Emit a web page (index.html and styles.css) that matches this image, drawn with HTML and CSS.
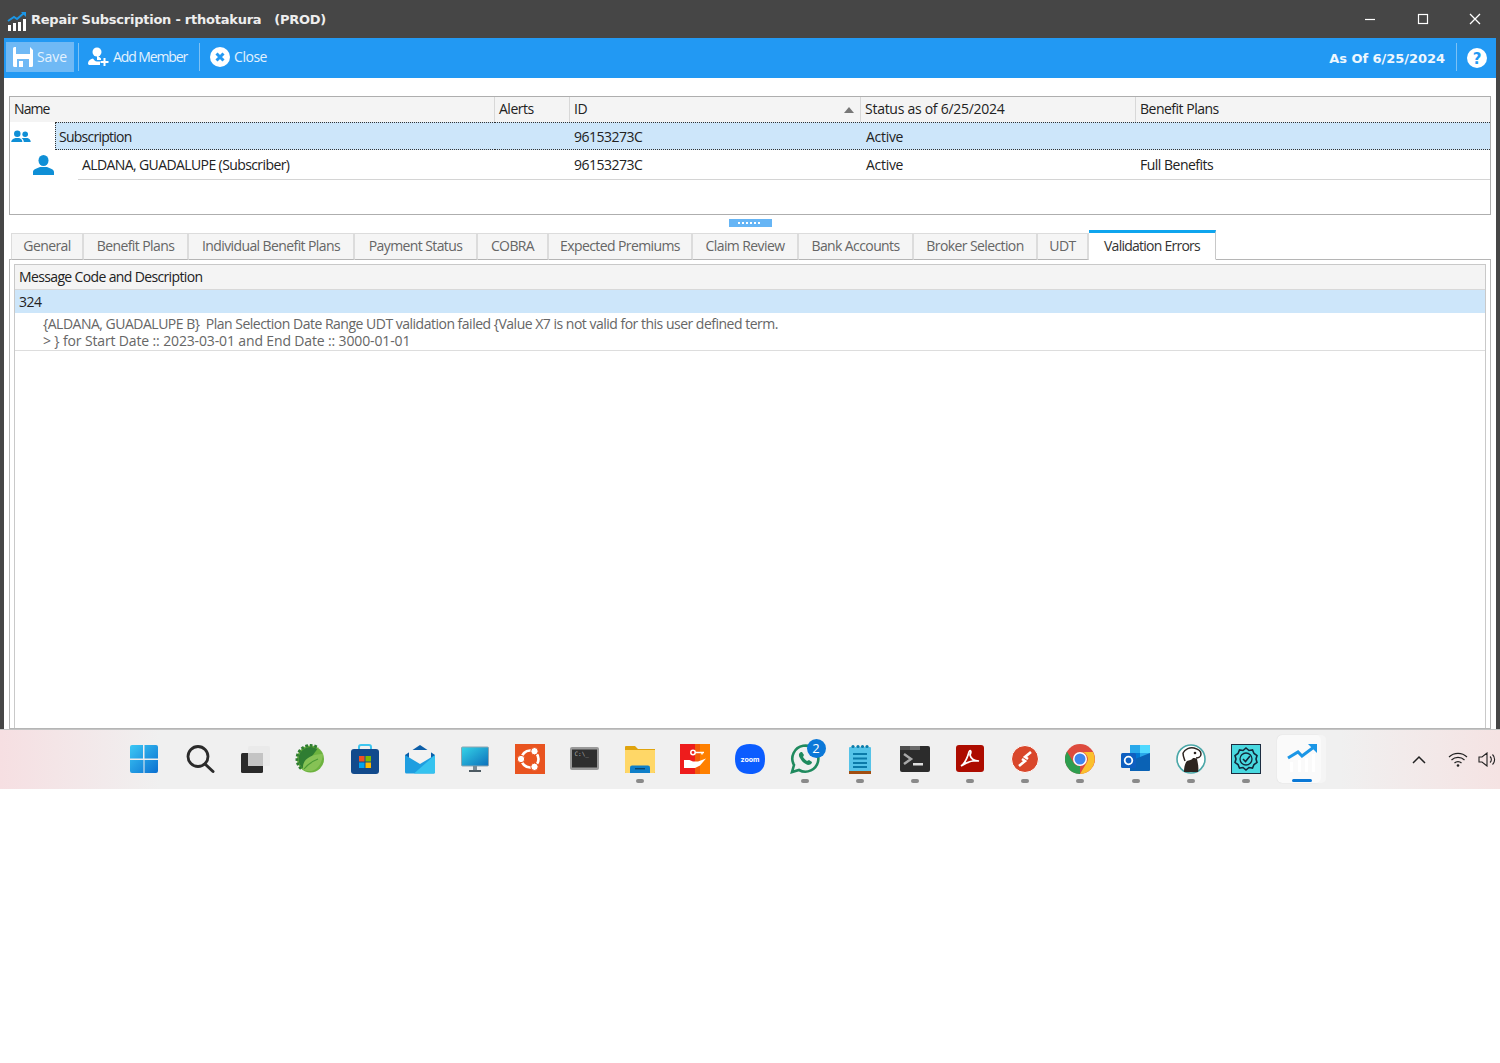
FILE: index.html
```html
<!DOCTYPE html>
<html lang="en">
<head>
<meta charset="utf-8">
<title>Repair Subscription</title>
<link rel="stylesheet" href="styles.css">
</head>
<body>
<div class="window">
  <header class="titlebar">
    <svg class="app-icon" width="22" height="22" viewBox="0 0 22 22"><path d="M2 11 L8 7 L11 9 L18 3" fill="none" stroke="#1b96e6" stroke-width="2"/><path d="M15 2 h5 v5z" fill="#1b96e6"/><path d="M2 15h3v6H2zM7 13h3v8H7zM12 12h3v9h-3zM17 9h3v12h-3z" fill="#fff"/></svg>
    <span class="title-text">Repair Subscription - rthotakura &nbsp; (PROD)</span>
    <div class="win-controls">
      <svg width="12" height="12" viewBox="0 0 12 12"><path d="M1 6.500h10" stroke="#fff" stroke-width="1.200"/></svg>
      <svg width="12" height="12" viewBox="0 0 12 12"><rect x="1.500" y="1.500" width="9" height="9" fill="none" stroke="#fff" stroke-width="1.200"/></svg>
      <svg width="12" height="12" viewBox="0 0 12 12"><path d="M1 1l10 10M11 1L1 11" stroke="#fff" stroke-width="1.300"/></svg>
    </div>
  </header>
  <nav class="toolbar">
    <button class="tool tool-active tool-save">
      <svg width="20" height="20" viewBox="0 0 20 20"><path d="M0 1.500A1.500 1.500 0 0 1 1.500 0H17l3 3v15.500a1.500 1.500 0 0 1-1.500 1.500h-17A1.500 1.500 0 0 1 0 18.500z" fill="#fff"/><rect x="3" y="0" width="14" height="7" fill="#6fb9f5"/><rect x="4" y="12" width="12" height="8" fill="#6fb9f5"/><rect x="6" y="14" width="4" height="6" fill="#fff"/></svg>
      <span>Save</span>
    </button>
    <i class="tool-sep"></i>
    <button class="tool tool-add">
      <svg width="21" height="20" viewBox="0 0 21 20"><circle cx="9" cy="5" r="4.500" fill="#fff"/><path d="M0 17c0-4 3-5 5-5.500 1 1 2 3 4 3l3 0v3.500H1z" fill="#fff"/><path d="M9 8l4 3.500v1.500H9z" fill="#fff"/><path d="M16.500 11v8M12.500 15h8" stroke="#fff" stroke-width="2"/></svg>
      <span>Add Member</span>
    </button>
    <i class="tool-sep"></i>
    <button class="tool tool-close">
      <svg width="20" height="20" viewBox="0 0 20 20"><circle cx="10" cy="10" r="10" fill="#fff"/><path d="M6.500 6.500l7 7M13.500 6.500l-7 7" stroke="#2299f3" stroke-width="3"/></svg>
      <span>Close</span>
    </button>
    <span class="as-of">As Of 6/25/2024</span>
    <i class="tool-sep sep-right"></i>
    <svg class="help" width="20" height="20" viewBox="0 0 20 20"><circle cx="10" cy="10" r="10" fill="#fff"/><text x="10" y="15.500" text-anchor="middle" class="help-mark">?</text></svg>
  </nav>

  <main class="content">
    <section class="grid">
      <div class="grid-row grid-head">
        <div class="gh gh-name">Name</div>
        <div class="gh">Alerts</div>
        <div class="gh gh-sort">ID<i class="sort-arrow"></i></div>
        <div class="gh gh-status">Status as of 6/25/2024</div>
        <div class="gh">Benefit Plans</div>
      </div>
      <div class="grid-row row-group">
        <div class="cell cell-name">
          <svg class="group-icon" width="20" height="13" viewBox="0 0 21 14"><circle cx="6.500" cy="4" r="3.500" fill="#0f8fd6"/><path d="M0 13c0-3 3-4 4.500-4.500h4C10 9 12 10 12 13z" fill="#0f8fd6"/><circle cx="15" cy="4.500" r="3" fill="#0f8fd6"/><path d="M11 8.500h6.500C19 9 21 10 21 13h-7.500c0-2-1-3.500-2.500-4.500z" fill="#0f8fd6"/></svg>
          <span class="focus-name">Subscription</span>
        </div>
        <div class="cell"></div>
        <div class="cell">96153273C</div>
        <div class="cell cell-status">Active</div>
        <div class="cell"></div>
      </div>
      <div class="grid-row row-member">
        <div class="cell cell-member">
          <svg class="member-icon" width="21" height="20" viewBox="0 0 21 20"><ellipse cx="10.500" cy="5.500" rx="5" ry="5.500" fill="#0f8fd6"/><path d="M0 20v-3c0-3 4-3.500 7-5h7c3 1.500 7 2 7 5v3z" fill="#0f8fd6"/></svg>
          <span class="member-name">ALDANA, GUADALUPE (Subscriber)</span>
        </div>
        <div class="cell"></div>
        <div class="cell">96153273C</div>
        <div class="cell cell-status">Active</div>
        <div class="cell">Full Benefits</div>
      </div>
    </section>

    <div class="splitter"><span class="grip"><i class="grip-dots"></i></span></div>

    <div class="tabs">
      <span class="tab">General</span>
      <span class="tab">Benefit Plans</span>
      <span class="tab">Individual Benefit Plans</span>
      <span class="tab">Payment Status</span>
      <span class="tab">COBRA</span>
      <span class="tab">Expected Premiums</span>
      <span class="tab">Claim Review</span>
      <span class="tab">Bank Accounts</span>
      <span class="tab">Broker Selection</span>
      <span class="tab">UDT</span>
      <span class="tab tab-active">Validation Errors</span>
    </div>
    <section class="tab-panel">
      <div class="errors">
        <div class="err-head">Message Code and Description</div>
        <div class="err-code">324</div>
        <div class="err-msg">{ALDANA, GUADALUPE B}&nbsp; Plan Selection Date Range UDT validation failed {Value X7 is not valid for this user defined term.<br><span class="err-line2">&gt; } for Start Date :: 2023-03-01 and End Date :: 3000-01-01</span></div>
      </div>
    </section>
  </main>
</div>

<footer class="taskbar">
  <div class="task-icons">
    <div class="slot slot-first"><svg width="30" height="30" viewBox="0 0 30 30"><defs><linearGradient id="w" x1="0" y1="0" x2="1" y2="1"><stop offset="0" stop-color="#3cc8f5"/><stop offset="1" stop-color="#0a6fd0"/></linearGradient></defs><path d="M1 3a2 2 0 0 1 2-2h11v13.500H1zM15.500 1H27a2 2 0 0 1 2 2v11.500H15.500zM1 16h13.500v13H3a2 2 0 0 1-2-2zM15.500 16H29v11a2 2 0 0 1-2 2H15.500z" fill="url(#w)"/></svg></div>
    <div class="slot"><svg width="30" height="30" viewBox="0 0 30 30"><circle cx="13" cy="12.500" r="10" fill="none" stroke="#2b2b2b" stroke-width="2.800"/><path d="M20 20l8 7.500" stroke="#2b2b2b" stroke-width="3" stroke-linecap="round"/></svg></div>
    <div class="slot"><svg width="30" height="30" viewBox="0 0 30 30"><rect x="1" y="9" width="22" height="20" rx="1.500" fill="#2a2a2a"/><rect x="8" y="2" width="22" height="20" rx="1.500" fill="#e9e9e9" fill-opacity=".8"/><rect x="8" y="9" width="15" height="13" fill="#c4c4c4"/></svg></div>
    <div class="slot"><svg width="30" height="30" viewBox="0 0 30 30"><defs><clipPath id="sp"><path d="M0 0h26L4 30H0z"/></clipPath></defs><circle cx="15.500" cy="15" r="13.500" fill="#6db33f"/><g clip-path="url(#sp)"><circle cx="15.500" cy="15" r="13.600" fill="none" stroke="#2f7d32" stroke-width="2.800" stroke-dasharray="2.700 1.800"/><circle cx="15.500" cy="15" r="12" fill="#2f7d32"/></g><path d="M8 25c-1-9 7-15 20-15-1 11-7 18-15 17-2 0-4-1-5-2z" fill="#86c255"/><path d="M9 25c4-5 9-8 14-10" stroke="#4a9a34" stroke-width="1.200" fill="none"/></svg></div>
    <div class="slot"><svg width="30" height="30" viewBox="0 0 30 30"><path d="M9 6V3a2 2 0 0 1 2-2h8a2 2 0 0 1 2 2v3" fill="none" stroke="#3ec6f0" stroke-width="2"/><rect x="1" y="5" width="28" height="25" rx="3" fill="#124a8c"/><rect x="9" y="12" width="5.500" height="5.500" fill="#f25022"/><rect x="15.500" y="12" width="5.500" height="5.500" fill="#7fba00"/><rect x="9" y="18.500" width="5.500" height="5.500" fill="#00a4ef"/><rect x="15.500" y="18.500" width="5.500" height="5.500" fill="#ffb900"/></svg></div>
    <div class="slot"><svg width="30" height="30" viewBox="0 0 30 30"><path d="M0 11L15 1l15 10v4H0z" fill="#0c5ea8"/><path d="M4 6h22v12H4z" fill="#f2f2f2"/><path d="M0 11l15 9 15-9v17a1.500 1.500 0 0 1-1.500 1.500h-27A1.500 1.500 0 0 1 0 28z" fill="#1f9ee0"/><path d="M30 11v17a1.500 1.500 0 0 1-1.500 1.500H9z" fill="#35c3ef"/></svg></div>
    <div class="slot"><svg width="30" height="30" viewBox="0 0 30 30"><defs><linearGradient id="m" x1="0" y1="0" x2="1" y2="1"><stop offset="0" stop-color="#35d5e8"/><stop offset="1" stop-color="#0c6fbb"/></linearGradient></defs><rect x="1.500" y="3" width="27" height="19" rx="1" fill="url(#m)" stroke="#8fa5b0"/><rect x="13" y="22" width="4" height="4" fill="#7d8c96"/><rect x="9" y="26" width="12" height="2" fill="#4d5a62"/></svg></div>
    <div class="slot"><svg width="30" height="30" viewBox="0 0 30 30"><rect width="30" height="30" fill="#e95420"/><circle cx="15" cy="15" r="8.500" fill="none" stroke="#fff" stroke-width="2.600"/><circle cx="6" cy="15" r="3.700" fill="#fff" stroke="#e95420"/><circle cx="19.500" cy="7.200" r="3.700" fill="#fff" stroke="#e95420"/><circle cx="19.500" cy="22.800" r="3.700" fill="#fff" stroke="#e95420"/></svg></div>
    <div class="slot"><svg width="30" height="30" viewBox="0 0 30 30"><rect y="3" width="29" height="23" rx="2" fill="#9a9a9a"/><rect x="2" y="5.500" width="25" height="18" fill="#2e2e2e"/><text x="4.500" y="12" class="cmd-text">C:\_</text></svg></div>
    <div class="slot slot-running"><svg width="30" height="30" viewBox="0 0 30 30"><path d="M0 3a1 1 0 0 1 1-1h9l3 3h17v24H1a1 1 0 0 1-1-1z" fill="#e0a40e"/><path d="M0 6h30v22a1 1 0 0 1-1 1H1a1 1 0 0 1-1-1z" fill="#ffd767"/><path d="M5 29v-5.500a2 2 0 0 1 2-2h16a2 2 0 0 1 2 2V29z" fill="#0f7fc9"/><rect x="10" y="24" width="10" height="1.400" fill="#08456f"/></svg></div>
    <div class="slot"><svg width="30" height="30" viewBox="0 0 30 30"><rect width="30" height="30" fill="#ee1c1c"/><rect x="15" width="15" height="30" fill="#f25b0a"/><rect x="20" width="10" height="30" fill="#ff8000"/><path d="M4 16h5.500l3.500 1.500h5l8-3-6 7-5 2.500H4z" fill="#fff"/><circle cx="13" cy="8.500" r="2.200" fill="none" stroke="#fff" stroke-width="1.500"/><path d="M15 8.500h9M22 8.500v2" stroke="#fff" stroke-width="1.500"/></svg></div>
    <div class="slot"><svg width="30" height="30" viewBox="0 0 30 30"><path d="M15 0c10 0 15 5 15 15s-5 15-15 15S0 25 0 15 5 0 15 0z" fill="#0b5cff"/><text x="15" y="17.500" text-anchor="middle" class="zoom-text">zoom</text></svg></div>
    <div class="slot slot-running"><svg width="30" height="30" viewBox="0 0 30 30"><path d="M2 28l2-7A13 13 0 1 1 9 26z" fill="none" stroke="#1f8a5e" stroke-width="2.600"/><path d="M11 8c-2 1-3 3-1 6 2 4 5 6 8 7 2 0 4-1 4-3l-3-2-2 1c-2-1-3-3-4-4l1-2-2-3z" fill="#1f8a5e"/></svg><b class="badge">2</b></div>
    <div class="slot slot-running"><svg width="30" height="30" viewBox="0 0 30 30"><rect x="4" y="3" width="22" height="25" rx="1" fill="#55c3e8"/><rect x="4" y="27" width="22" height="3" fill="#a14e12"/><g fill="#0b7aa8"><circle cx="8" cy="2.500" r="1.600"/><circle cx="13" cy="2.500" r="1.600"/><circle cx="17.500" cy="2.500" r="1.600"/><circle cx="22" cy="2.500" r="1.600"/><rect x="8" y="9" width="14" height="2"/><rect x="8" y="13.500" width="14" height="2"/><rect x="8" y="18" width="14" height="2"/><rect x="8" y="22" width="14" height="2"/></g></svg></div>
    <div class="slot slot-running"><svg width="30" height="30" viewBox="0 0 30 30"><rect y="2" width="30" height="26" rx="2" fill="#2c2c2c"/><rect x="10" y="2" width="10" height="4" fill="#6b6b6b"/><rect y="2" width="10" height="4" fill="#505050"/><path d="M4 10l7 5-7 5" fill="none" stroke="#a8a8a8" stroke-width="2.500"/><rect x="13" y="19" width="10" height="2.500" fill="#ddd"/></svg></div>
    <div class="slot slot-running"><svg width="30" height="30" viewBox="0 0 30 30"><rect x="1" y="1" width="28" height="27" rx="3" fill="#ad0c00"/><path d="M6 22c3-2 6-7 8-14 1-3 3-1 1 3 1 4 4 6 9 6-6-1-12 1-18 5z" fill="none" stroke="#fff" stroke-width="1.700"/></svg></div>
    <div class="slot slot-running"><svg width="30" height="30" viewBox="0 0 30 30"><circle cx="15" cy="15" r="13.500" fill="#d9472b" stroke="#fff" stroke-width="1"/><path d="M21 8l-6 5 3 2M9 22l6-5-3-2" fill="none" stroke="#fff" stroke-width="2.600"/></svg></div>
    <div class="slot slot-running"><svg width="30" height="30" viewBox="0 0 30 30"><circle cx="15" cy="15" r="15" fill="#dd4b3e"/><path d="M15 8h13a15 15 0 0 1-13 22l6.500-11A7 7 0 0 0 15 8z" fill="#fbc02d"/><path d="M2 7.500l6.500 11A7 7 0 0 0 15 22l-0 8A15 15 0 0 1 2 7.500z" fill="#2e9e4f"/><circle cx="15" cy="15" r="7" fill="#fff"/><circle cx="15" cy="15" r="5.500" fill="#3f86ed"/></svg></div>
    <div class="slot slot-running slot-nudge"><svg width="30" height="30" viewBox="0 0 30 30"><path d="M9 1h19a1 1 0 0 1 1 1v15H9z" fill="#28a8ea"/><path d="M19 1h9a1 1 0 0 1 1 1v7H19z" fill="#50d9ff"/><path d="M9 9h10v9H9z" fill="#0078d4"/><path d="M9 17l20-8v17a1 1 0 0 1-1 1H9z" fill="#0a62b5"/><rect x="0" y="9" width="15" height="15" rx="1.500" fill="#0f5fc0"/><circle cx="7.500" cy="16.500" r="3.800" fill="none" stroke="#fff" stroke-width="1.800"/></svg></div>
    <div class="slot slot-running"><svg width="30" height="30" viewBox="0 0 30 30"><circle cx="15" cy="15" r="14" fill="#fff" stroke="#4aa7a8" stroke-width="1.600"/><path d="M8 28c0-5 1-9 3-11 2-1 5-1 6-3 2 0 3 0 4 1 1 5 2 9 1 13z" fill="#2d2420"/><path d="M7 9c2-4 7-6 11-5 4 1 7 3 7 6 0 3-3 4-5 4" fill="none" stroke="#2d2420" stroke-width="1.500"/><path d="M9 17c-1-3-2-5-2-8" fill="none" stroke="#2d2420" stroke-width="1.500"/><circle cx="19" cy="9" r="1.300" fill="#2d2420"/></svg></div>
    <div class="slot slot-running"><svg width="30" height="30" viewBox="0 0 30 30"><rect x=".5" y=".5" width="29" height="29" fill="#49d9e0" stroke="#1c2c40"/><path d="M15 4l3 2.500 3.500-.5 1.500 3.500 3 2-1 3.500 1 3.500-3 2-1.500 3.500-3.500-.5L15 26l-3-2.500-3.500.5L7 20.500l-3-2 1-3.500-1-3.500 3-2L8.500 6l3.500.5z" fill="none" stroke="#13283a" stroke-width="1.600"/><circle cx="15" cy="15" r="6" fill="none" stroke="#13283a" stroke-width="1.300"/><path d="M12 15l2.500 2.500L19 12" fill="none" stroke="#13283a" stroke-width="1.600"/></svg></div>
    <div class="slot slot-active"><svg width="30" height="30" viewBox="0 0 30 30"><path d="M1 15l10-6 4 4L27 4" fill="none" stroke="#1b96e6" stroke-width="3"/><path d="M21 1h9v9z" fill="#1b96e6"/><path d="M3 19h3v10H3zM11 17h3v12h-3zM18 15h3v14h-3zM25 11h3v18h-3z" fill="#fff"/></svg></div>
  </div>
  <div class="tray">
    <svg width="14" height="9" viewBox="0 0 14 9"><path d="M1 8l6-6 6 6" fill="none" stroke="#222" stroke-width="1.500"/></svg>
    <svg class="tray-wifi" width="20" height="15" viewBox="0 0 20 15"><path d="M1 5a13 13 0 0 1 18 0M3.500 8a9.500 9.500 0 0 1 13 0M6.500 11a5 5 0 0 1 7 0" fill="none" stroke="#222" stroke-width="1.200"/><circle cx="10" cy="13.500" r="1.300" fill="#222"/></svg>
    <svg width="18" height="15" viewBox="0 0 18 15"><path d="M1 5h3l5-4v13l-5-4H1z" fill="none" stroke="#222" stroke-width="1.100"/><path d="M12 4.500a4 4 0 0 1 0 6M14.500 2.500a7 7 0 0 1 0 10" fill="none" stroke="#222" stroke-width="1.100"/></svg>
  </div>
</footer>
</body>
</html>
```
FILE: styles.css
```css
* { box-sizing: border-box; }
html, body { margin: 0; padding: 0; background: #fff; }
body { height: 1063px; overflow: hidden; font-family: "Open Sans", "Noto Sans", sans-serif; font-size: 14px; color: #222; }

.window { height: 729px; background: #464646; padding: 0 4px; display: flex; flex-direction: column; overflow: hidden; }

.titlebar { height: 38px; flex: none; display: flex; align-items: center; margin: 0 -4px; padding: 0 19px 0 6px; color: #eee; }
.app-icon { margin-right: 3px; margin-top: 3px; }
.title-text { font-family: "DejaVu Sans", sans-serif; font-weight: 700; font-size: 13px; letter-spacing: -.24px; }
.win-controls { margin-left: auto; display: flex; gap: 40.500px; }

.toolbar { height: 40px; flex: none; background: #2299f3; display: flex; align-items: center; padding: 0 9px 2px 2px; color: #e3f2fe; }
.tool { height: 30px; display: flex; align-items: center; gap: 4px; border: 0; background: transparent; color: inherit; font: inherit; letter-spacing: -.5px; }
.tool span { padding-bottom: 2px; }
.tool-save { padding: 0 7px; letter-spacing: -.1px; }
.tool-add { padding: 0 8px 0 5px; letter-spacing: -1.100px; }
.tool-close { padding: 0 6px; }
.tool-active { background: #6fb9f5; }
.tool-sep { width: 1px; height: 28px; background: #7cc1f5; margin: 0 4px; }
.as-of { margin-left: auto; margin-top: 2px; font-family: "DejaVu Sans", sans-serif; font-weight: 700; font-size: 13px; color: #eef7fe; letter-spacing: -.04px; }
.sep-right { margin: 0 10px 0 11px; }
.help { margin-top: 2px; }
.help-mark { font: 700 15px "DejaVu Sans", sans-serif; fill: #2299f3; }

.content { flex: 1; background: #fff; padding: 18px 5px 0; display: flex; flex-direction: column; min-height: 0; }

.grid { height: 119px; flex: none; border: 1px solid #aeaeae; }
.grid-row { display: grid; grid-template-columns: 485px 75px 291px 275px 1fr; }
.grid-head { height: 25px; background: #f4f4f4; }
.gh { display: flex; align-items: center; padding: 0 0 2px 4px; border-right: 1px solid #d8d8d8; letter-spacing: -.5px; }
.gh:last-child { border-right: 0; }
.gh-name { letter-spacing: -.9px; }
.gh-status { letter-spacing: -.27px; }
.gh-sort { position: relative; }
.sort-arrow { position: absolute; right: 6px; top: 10px; border: 5px solid transparent; border-top: 0; border-bottom: 6px solid #777; }
.cell { display: flex; align-items: center; padding-left: 4px; letter-spacing: -.5px; }
.cell-status { padding-left: 5px; letter-spacing: -.3px; }

.row-group { height: 28px; background: #cde6fa; border-top: 1px dotted #333; border-bottom: 1px dotted #333; }
.row-group .cell { height: 26px; }
.cell-name { background: #fff; padding-left: 0; margin: -1px 0; height: 28px !important; }
.group-icon { margin: 0 0 0 1px; flex: none; }
.focus-name { display: flex; align-items: center; align-self: stretch; margin-left: 24px; padding-left: 3px; flex: 1; background: #cde6fa; border-left: 1px dotted #333; border-top: 1px dotted #333; border-bottom: 1px dotted #333; letter-spacing: -.75px; }
.row-member { height: 30px; }
.row-member .cell { border-bottom: 1px solid #d4d4d4; }
.row-member .cell-member { position: relative; border-bottom: 0; }
.member-icon { position: absolute; left: 23px; top: 5px; }
.member-name { position: absolute; left: 68px; right: 0; top: 0; height: 30px; display: flex; align-items: center; padding-left: 4px; border-bottom: 1px solid #d4d4d4; letter-spacing: -.6px; }

.splitter { height: 18px; flex: none; display: flex; justify-content: center; align-items: flex-start; padding-top: 4px; }
.grip { width: 43px; height: 8px; background: #66b5f5; display: flex; align-items: center; justify-content: center; }
.grip-dots { width: 24px; height: 2px; background: repeating-linear-gradient(90deg, #fff 0 2px, transparent 2px 4px); }

.tabs { height: 27px; flex: none; display: grid; grid-template-columns: 73px 105px 166px 123px 71px 144px 106px 115px 124px 51px 127px; padding-left: 2px; border-bottom: 1px solid #b5b5b5; position: relative; }
.tab { height: 27px; display: flex; align-items: center; justify-content: center; padding-bottom: 2px; background: #f5f5f5; border-top: 1px solid #dcdcdc; border-right: 2px solid #dcdcdc; border-bottom: 1px solid #b5b5b5; color: #666; letter-spacing: -.6px; white-space: nowrap; }
.tab:first-child { border-left: 1px solid #dcdcdc; }
.tab-active { height: 30px; margin-top: -3px; background: #fff; border-top: 3px solid #0ea5ee; border-right: 1px solid #c8c8c8; border-bottom: 1px solid #fff; color: #333; letter-spacing: -.75px; }

.tab-panel { flex: 1; min-height: 0; padding: 4px 4px 0; border: 1px solid #b5b5b5; border-top: 0; }
.errors { height: 100%; border: 1px solid #c9c9c9; border-bottom: 0; }
.err-head { height: 25px; background: #f4f4f4; border-bottom: 1px solid #d8d8d8; display: flex; align-items: center; padding: 0 0 2px 4px; letter-spacing: -.64px; color: #222; }
.err-code { height: 23px; background: #cde6fa; display: flex; align-items: center; padding-left: 4px; letter-spacing: -.5px; }
.err-msg { height: 38px; padding: 3px 0 0 28px; line-height: 16.500px; color: #666; border-bottom: 1px solid #ddd; letter-spacing: -.5px; }
.err-line2 { letter-spacing: -.14px; }

.taskbar { height: 60px; border-top: 1px solid #c4c4c4; background: linear-gradient(90deg, #f6dfe2 0, #f0f0f0 160px, #f0f0f0 1340px, #f5e3e3 100%); display: flex; position: relative; }
.task-icons { display: flex; padding-left: 115.500px; }
.slot { width: 55px; height: 59px; display: flex; justify-content: center; padding-top: 14px; position: relative; }
.slot-first { width: 57px; }
.slot-nudge { margin-left: 1px; }
.slot-running::after, .slot-active::after { content: ""; position: absolute; left: 50%; bottom: 6px; width: 8px; height: 4px; margin-left: -4px; border-radius: 2px; background: #8a8a8a; }
.slot-active { background: #fafafa; border-radius: 5px; width: 44px; margin: 5px 0 0 3.500px; height: 48px; padding: 8px 0 0 5px; box-shadow: 5px 0 0 #f5f5f5, 0 0 1px #ccc; }
.slot-active::after { width: 20px; height: 3px; margin-left: -7.500px; background: #0a78d6; bottom: 1px; }
.badge { position: absolute; left: 29px; top: 9px; width: 19px; height: 19px; border-radius: 50%; background: #0b78d8; color: #fff; font: 400 13px/19px "Open Sans", sans-serif; text-align: center; }
.cmd-text { font: 6px "DejaVu Sans Mono", monospace; fill: #aaa; }
.zoom-text { font: 700 7px "Inter", sans-serif; fill: #fff; }
.tray { position: absolute; right: 4px; top: 22px; display: flex; align-items: center; }
.tray-wifi { margin: 0 10px 0 22px; }
```
